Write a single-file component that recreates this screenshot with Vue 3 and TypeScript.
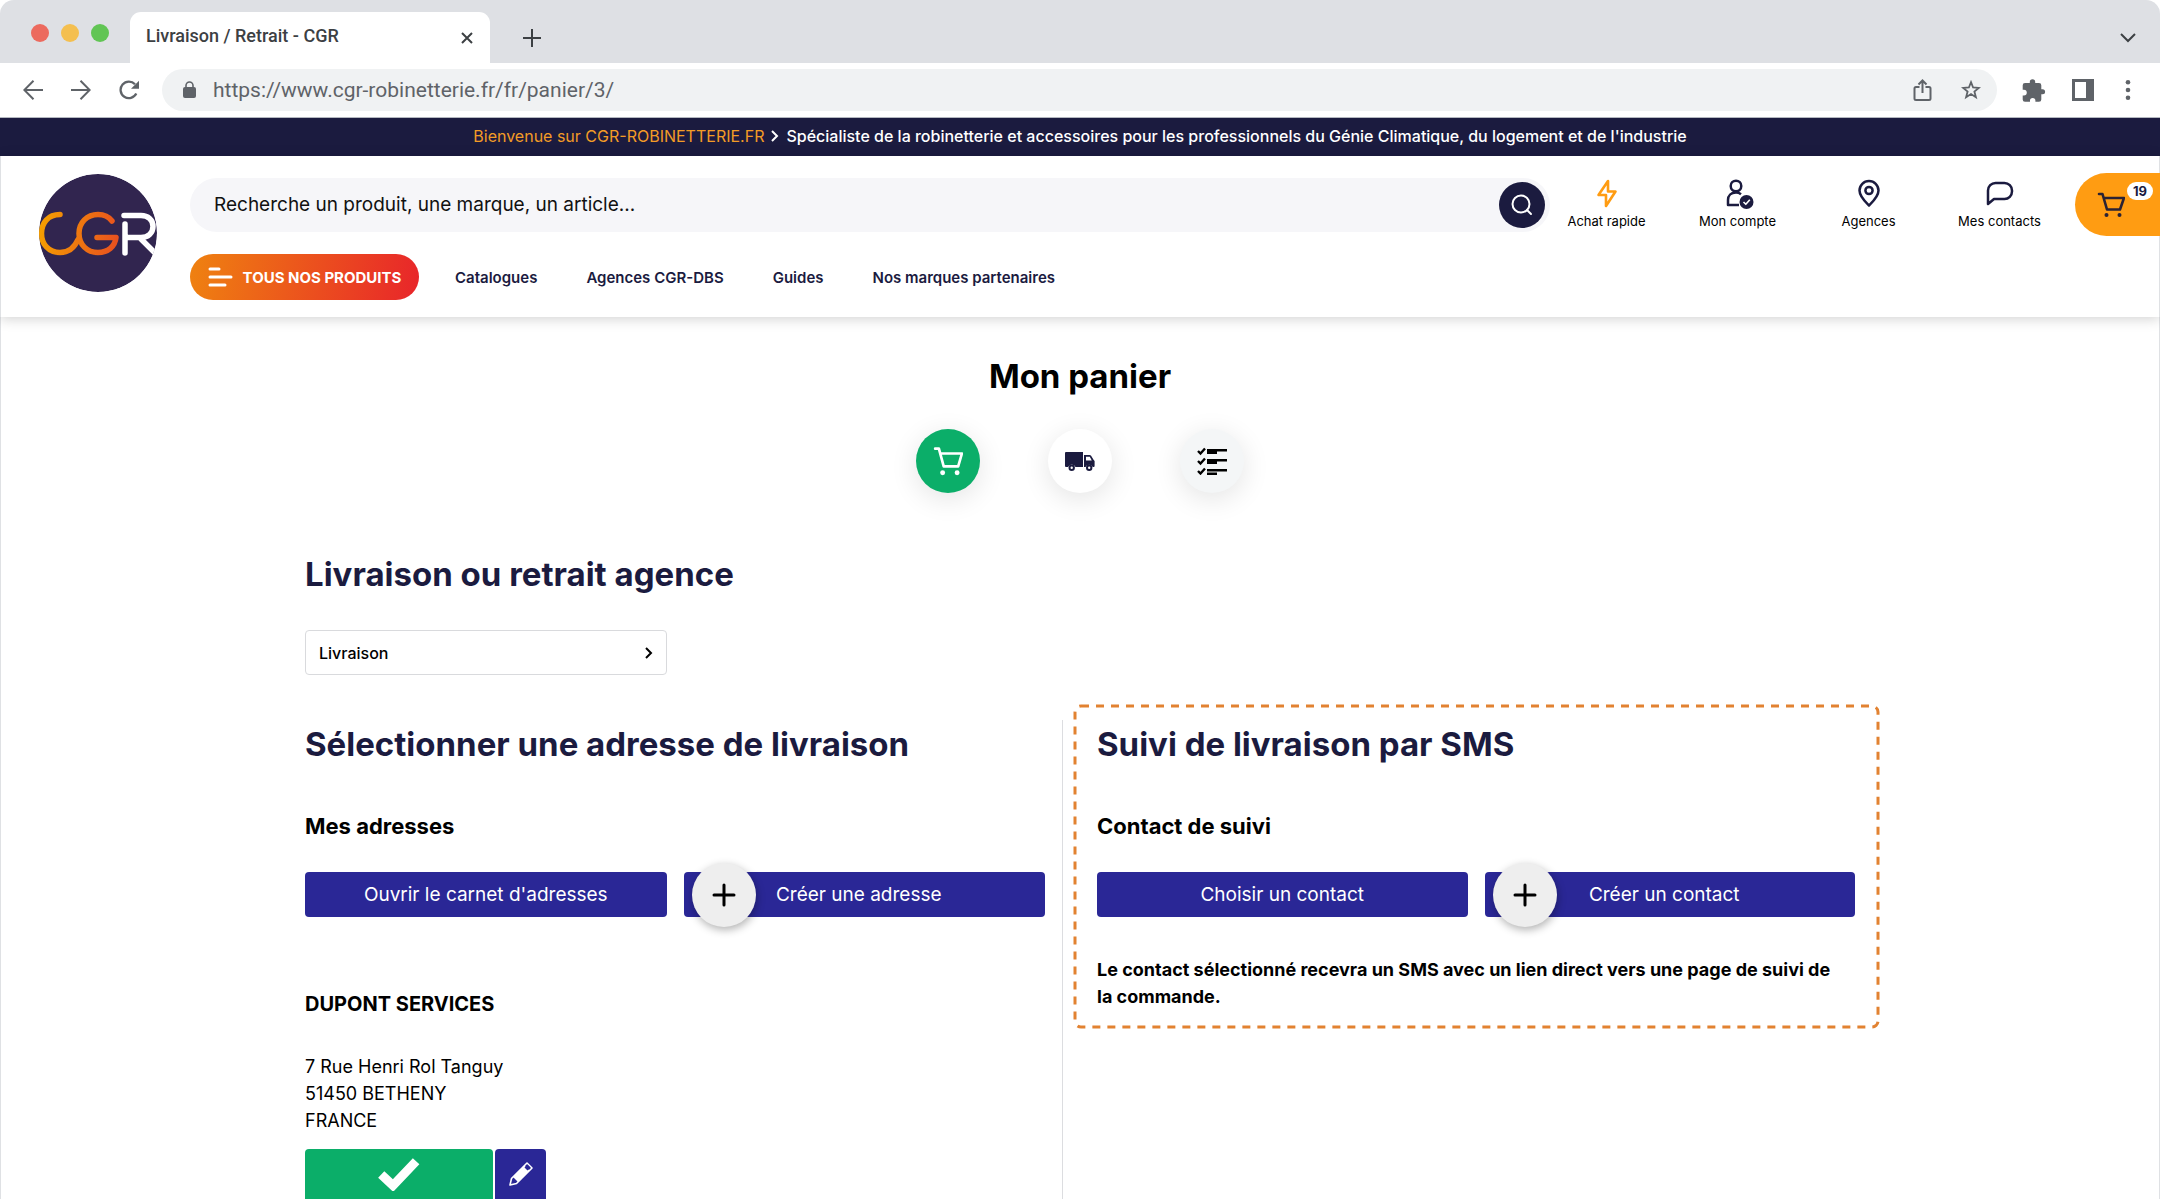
<script setup lang="ts">
import { ref } from 'vue'

interface Shortcut {
  label: string
  icon: 'bolt' | 'account' | 'pin' | 'chat'
}

const search = ref('')
const mode = ref('Livraison')
const address = ref('https://www.cgr-robinetterie.fr/fr/panier/3/')

const shortcuts: Shortcut[] = [
  { label: 'Achat rapide', icon: 'bolt' },
  { label: 'Mon compte', icon: 'account' },
  { label: 'Agences', icon: 'pin' },
  { label: 'Mes contacts', icon: 'chat' },
]

const links: string[] = ['Catalogues', 'Agences CGR-DBS', 'Guides', 'Nos marques partenaires']
</script>

<template>
  <div class="window">
    <div class="tabs">
      <div class="lights">
        <span class="light red"></span>
        <span class="light yellow"></span>
        <span class="light green"></span>
      </div>
      <div class="tab">
        <span>Livraison / Retrait - CGR</span>
        <button class="plain" aria-label="Fermer l'onglet">
          <svg width="14" height="14" viewBox="0 0 14 14" fill="none" stroke="#3c4043" stroke-width="2"><path d="M2 2l10 10M12 2L2 12" /></svg>
        </button>
      </div>
      <button class="plain new-tab" aria-label="Nouvel onglet">
        <svg width="18" height="18" viewBox="0 0 18 18" fill="none" stroke="#3c4043" stroke-width="2"><path d="M9 0v18M0 9h18" /></svg>
      </button>
      <button class="plain tab-list" aria-label="Liste des onglets">
        <svg width="16" height="10" viewBox="0 0 16 10" fill="none" stroke="#3c4043" stroke-width="2"><path d="M1 1l7 7 7-7" /></svg>
      </button>
    </div>

    <div class="toolbar">
      <div class="moves">
        <button class="plain" aria-label="Précédent">
          <svg width="20" height="20" viewBox="0 0 20 20" fill="none" stroke="#5f6368" stroke-width="2"><path d="M20 10H1.500M10.500 .8L1.300 10l9.200 9.200" /></svg>
        </button>
        <button class="plain" aria-label="Suivant">
          <svg width="20" height="20" viewBox="0 0 20 20" fill="none" stroke="#5f6368" stroke-width="2"><path d="M0 10h18.500M9.500 .8l9.200 9.200-9.200 9.200" /></svg>
        </button>
        <button class="plain" aria-label="Actualiser">
          <svg width="20" height="20" viewBox="0 0 20 20"><path d="M17.300 13.600A8.300 8.300 0 1 1 16 4.200" fill="none" stroke="#5f6368" stroke-width="2.300" /><path d="M20 .8v8h-8z" fill="#5f6368" /></svg>
        </button>
      </div>
      <label class="omnibox">
        <svg width="13" height="18" viewBox="0 0 13 18"><rect y="6" width="13" height="11" rx="2" fill="#5f6368" /><path d="M3 7V4.500a3.500 3.500 0 0 1 7 0V7" fill="none" stroke="#5f6368" stroke-width="1.600" /></svg>
        <input v-model="address" type="text" aria-label="Adresse" />
        <svg width="20" height="22" viewBox="0 0 20 22" fill="none" stroke="#5f6368" stroke-width="2"><path d="M6.500 8H3a1.500 1.500 0 0 0-1.500 1.500v10A1.500 1.500 0 0 0 3 21h13a1.500 1.500 0 0 0 1.500-1.500v-10A1.500 1.500 0 0 0 16 8h-3.500M9.500 14V2M5.500 5.500l4-4 4 4" /></svg>
        <svg class="star" width="20" height="20" viewBox="0 0 20 20" fill="none" stroke="#5f6368" stroke-width="1.800"><path d="M10 2.200l2.100 5.300 5.700.4-4.400 3.600 1.500 5.800-4.900-3.200-4.900 3.200 1.500-5.800L2.200 7.900l5.700-.4z" /></svg>
      </label>
      <div class="tools">
        <button class="plain" aria-label="Extensions">
          <svg width="24" height="23" viewBox="0 0 24 23" fill="#5f6368"><path d="M7.800 4V3a2.700 2.700 0 0 1 5.400 0v1H17a2.300 2.300 0 0 1 2.300 2.300v4h1.300a2.500 2.500 0 0 1 0 5h-1.300V20.500A2.300 2.300 0 0 1 17 22.800h-3.600v-1.200a2.700 2.700 0 0 0-5.400 0v1.200H3A2.300 2.300 0 0 1 .7 20.500v-4h1.200a2.900 2.900 0 0 0 0-5.800H.7V6.300A2.300 2.300 0 0 1 3 4z" /></svg>
        </button>
        <button class="plain" aria-label="Panneau latéral">
          <svg width="22" height="22" viewBox="0 0 22 22"><path fill="#5f6368" fill-rule="evenodd" d="M0 0h22v22H0zM3 3v16h11V3z" /></svg>
        </button>
        <button class="plain" aria-label="Menu">
          <svg width="6" height="20" viewBox="0 0 6 20" fill="#5f6368"><circle cx="3" cy="2.300" r="2.300" /><circle cx="3" cy="10" r="2.300" /><circle cx="3" cy="17.700" r="2.300" /></svg>
        </button>
      </div>
    </div>

    <div class="page">
      <div class="banner">
        <span class="welcome">Bienvenue sur CGR-ROBINETTERIE.FR</span>
        <svg width="8" height="12" viewBox="0 0 8 12" fill="none" stroke="#fff" stroke-width="2"><path d="M1 1l5 5-5 5" /></svg>
        <span>Spécialiste de la robinetterie et accessoires pour les professionnels du Génie Climatique, du logement et de l'industrie</span>
      </div>

      <header class="header">
        <a href="#" class="logo" aria-label="CGR">
          <svg width="118" height="118" viewBox="0 0 118 118">
            <defs>
              <clipPath id="disc"><circle cx="59" cy="59" r="59" /></clipPath>
              <linearGradient id="flame" gradientUnits="userSpaceOnUse" x1="0" y1="50" x2="80" y2="62"><stop offset="0" stop-color="#f5a000" /><stop offset="1" stop-color="#e8501f" /></linearGradient>
            </defs>
            <g clip-path="url(#disc)">
              <circle cx="59" cy="59" r="59" fill="#31254f" />
              <g fill="none" stroke-width="5.500" stroke-linecap="round" stroke-linejoin="round">
                <path stroke="url(#flame)" d="M21 40.500C9 40.500 2.500 49 2.500 59.500s7 19 18.500 19c10 0 15-6 18-13" />
                <path stroke="url(#flame)" d="M73 47C70 43 65 40.500 59 40.500c-11 0-19 8-19 19s8 19 19 19c10 0 17-6 18-15H58" />
                <path stroke="#fff" d="M85 41.500h17c7 0 12 4.500 12 11s-5 11-12 11H89M86 50v29M102 65l16 16" />
              </g>
            </g>
          </svg>
        </a>
        <div class="header-body">
          <div class="header-top">
            <form class="search" @submit.prevent>
              <input v-model="search" type="text" aria-label="Recherche" placeholder="Recherche un produit, une marque, un article..." />
              <button type="submit" aria-label="Rechercher">
                <svg width="22" height="22" viewBox="0 0 22 22" fill="none" stroke="#fff" stroke-width="2" stroke-linecap="round"><circle cx="10" cy="10" r="8.500" /><path d="M16 16l4 4" /></svg>
              </button>
            </form>
            <nav class="shortcuts">
              <a v-for="item in shortcuts" :key="item.label" href="#">
                <svg v-if="item.icon === 'bolt'" width="32" height="32" viewBox="0 0 32 32" fill="none" stroke="#ff9c12" stroke-width="2.600" stroke-linejoin="round"><path d="M17 4L7.500 18h7.500L15 29l9.500-14.500H17z" /></svg>
                <svg v-else-if="item.icon === 'account'" width="32" height="32" viewBox="0 0 32 32" fill="none" stroke="#1b1b3f" stroke-width="2.500" stroke-linejoin="round"><circle cx="14" cy="9" r="5.300" /><path d="M19 17.200c-2-1.600-3-1.700-5-1.700-5 0-8 3-8 7.500V28h11" /><circle cx="24.500" cy="25" r="7" fill="#1b1b3f" stroke="none" /><path d="M21.500 25l2.300 2.300 4-4.500" stroke="#fff" stroke-width="1.600" /></svg>
                <svg v-else-if="item.icon === 'pin'" width="32" height="32" viewBox="0 0 32 32" fill="none" stroke="#1b1b3f" stroke-width="2.500" stroke-linejoin="round"><path d="M16 28.500c-4-4-9.500-9-9.500-15a9.500 9.500 0 0 1 19 0c0 6-5.500 11-9.500 15z" /><circle cx="16" cy="13.500" r="3.600" /></svg>
                <svg v-else width="32" height="32" viewBox="0 0 32 32" fill="none" stroke="#1b1b3f" stroke-width="2.500" stroke-linejoin="round"><path d="M4 27V13.500a7.500 7.500 0 0 1 7.500-7.500h9a7.500 7.500 0 0 1 7.500 7.500v1a7.500 7.500 0 0 1-7.500 7.500H10z" /></svg>
                <span>{{ item.label }}</span>
              </a>
            </nav>
            <a href="#" class="cart" aria-label="Panier">
              <svg width="28" height="28" viewBox="0 0 28 28" fill="none" stroke="#2b2233" stroke-width="2.600" stroke-linejoin="round" stroke-linecap="round"><path d="M2 3h3.500L10 18.500h13L27 7H7" /><circle cx="9.500" cy="24" r="2" fill="#2b2233" stroke="none" /><circle cx="22.500" cy="24" r="2" fill="#2b2233" stroke="none" /></svg>
              <span class="count">19</span>
            </a>
          </div>
          <nav class="menu">
            <button class="all">
              <svg width="25" height="20" viewBox="0 0 25 20" fill="none" stroke="#fff" stroke-width="3" stroke-linecap="round"><path d="M2 2h9M2 10h21M2 18h15" /></svg>
              TOUS NOS PRODUITS
            </button>
            <a v-for="link in links" :key="link" href="#">{{ link }}</a>
          </nav>
        </div>
      </header>

      <main class="main">
        <h1>Mon panier</h1>
        <div class="steps">
          <span class="step done">
            <svg width="30" height="30" viewBox="0 0 28 28" fill="none" stroke="#fff" stroke-width="2.500" stroke-linejoin="round" stroke-linecap="round"><path d="M2 2.500h3.500L10 19h13.500L27 7H7" /><circle cx="9" cy="25" r="2.300" fill="#fff" stroke="none" /><circle cx="22.500" cy="25" r="2.300" fill="#fff" stroke="none" /></svg>
          </span>
          <span class="step">
            <svg width="30" height="20" viewBox="0 0 30 20"><path fill="#1b1b3f" d="M1 1h17v15H10.500a4 4 0 0 0-7.500 0H1a1 1 0 0 1-1-1V2a1 1 0 0 1 1-1z" /><path fill="#1b1b3f" fill-rule="evenodd" d="M19 4h5.500a2 2 0 0 1 1.600.8l2.600 4.200.9 1v5a1 1 0 0 1-1 1h-.8a4 4 0 0 0-7.300 0H19zM21 5.800v3.800h5.800l-2-3.800z" /><g fill="#fff" stroke="#1b1b3f" stroke-width="2"><circle cx="6.700" cy="16.700" r="2.200" /><circle cx="24.200" cy="16.700" r="2.200" /></g></svg>
          </span>
          <span class="step next">
            <svg width="30" height="28" viewBox="0 0 30 28"><g fill="none" stroke="#000" stroke-width="2.400"><path d="M1 4l2.500 2.500L8 1.500M1 14l2.500 2.500L8 11.500M1 24l2.500 2.500L8 21.500" /></g><path d="M10 2h20v2.500H20V7H10zM10 12h20v2.500H20V17H10zM10 22h20v2.500H10zM10 25.500h10V28H10z" /></svg>
          </span>
        </div>

        <h2 class="mode-title"><label for="mode">Livraison ou retrait agence</label></h2>
        <div class="select">
          <select id="mode" v-model="mode">
            <option>Livraison</option>
            <option>Retrait agence</option>
          </select>
          <svg width="8" height="12" viewBox="0 0 8 12" fill="none" stroke="#000" stroke-width="2"><path d="M1 1l5 5-5 5" /></svg>
        </div>

        <div class="columns">
          <section class="addresses">
            <h2>Sélectionner une adresse de livraison</h2>
            <h3>Mes adresses</h3>
            <div class="actions">
              <button>Ouvrir le carnet d'adresses</button>
              <button class="create">
                <span class="plus"><svg width="24" height="24" viewBox="0 0 24 24" fill="none" stroke="#000" stroke-width="3" stroke-linecap="round"><path d="M12 2v20M2 12h20" /></svg></span>
                Créer une adresse
              </button>
            </div>
            <h4>DUPONT SERVICES</h4>
            <address>7 Rue Henri Rol Tanguy<br />51450 BETHENY<br />FRANCE</address>
            <div class="choice">
              <button class="pick" aria-label="Choisir cette adresse">
                <svg width="44" height="34" viewBox="0 0 44 34" fill="none" stroke="#fff" stroke-width="9" stroke-linecap="square"><path d="M7.500 20.500L16 28.500 36 7.500" /></svg>
              </button>
              <button class="edit" aria-label="Modifier">
                <svg width="24" height="24" viewBox="0 0 24 24" fill="none" stroke="#fff" stroke-width="1.600" stroke-linejoin="round"><path d="M1 23l1.500-6.500L18 1l5 5L7.500 21.500z" /><path d="M4 15L15.500 3.500l5 5L9 20z" fill="#fff" stroke="none" /><path d="M15.500 5.500l3-3L21.500 5.500l-3 3z" fill="#2a2796" stroke="none" /></svg>
              </button>
            </div>
          </section>

          <div class="tracking-cell">
            <section class="tracking">
              <svg class="outline" aria-hidden="true"><rect width="100%" height="100%" rx="6" fill="none" stroke="#e28231" stroke-width="3" stroke-dasharray="8 7" /></svg>
              <h2>Suivi de livraison par SMS</h2>
              <h3>Contact de suivi</h3>
              <div class="actions">
                <button>Choisir un contact</button>
                <button class="create">
                  <span class="plus"><svg width="24" height="24" viewBox="0 0 24 24" fill="none" stroke="#000" stroke-width="3" stroke-linecap="round"><path d="M12 2v20M2 12h20" /></svg></span>
                  Créer un contact
                </button>
              </div>
              <p>Le contact sélectionné recevra un SMS avec un lien direct vers une page de suivi de la commande.</p>
            </section>
          </div>
        </div>
      </main>
    </div>
  </div>
</template>

<style>
body {
  background: #fff;
}
</style>

<style scoped>
* {
  box-sizing: border-box;
  margin: 0;
}
.window {
  min-height: 100vh;
  display: flex;
  flex-direction: column;
  font-family: Inter, 'Liberation Sans', sans-serif;
  font-size: 18px;
  color: #000;
}
svg {
  display: block;
  flex: none;
}
a {
  color: inherit;
  text-decoration: none;
}
button,
input,
select {
  font: inherit;
  color: inherit;
  border: 0;
  padding: 0;
}
.plain {
  background: none;
  display: flex;
}
.tabs {
  height: 63px;
  background: #dee0e4;
  border-radius: 14px 14px 0 0;
  display: flex;
  align-items: center;
  padding: 0 24px 0 31px;
  font-family: Roboto, sans-serif;
}
.lights {
  display: flex;
  gap: 12px;
  width: 99px;
}
.light {
  width: 18px;
  height: 18px;
  border-radius: 50%;
  margin-top: 2px;
}
.red {
  background: #ec6a5e;
}
.yellow {
  background: #f4bf4f;
}
.green {
  background: #61c554;
}
.tab {
  align-self: flex-end;
  width: 360px;
  height: 51px;
  padding: 0 16px 4px;
  background: #fff;
  border-radius: 11px 11px 0 0;
  display: flex;
  align-items: center;
  justify-content: space-between;
  font-size: 18px;
  font-weight: 500;
  color: #3c4043;
}
.tab .plain {
  margin-top: 4px;
}
.new-tab {
  margin: 12px 0 0 33px;
}
.tab-list {
  margin: 12px 0 0 auto;
}
.toolbar {
  height: 55px;
  display: flex;
  align-items: center;
  padding: 0 29px 0 23px;
  border-bottom: 1px solid #b4b8c0;
}
.moves {
  display: flex;
  gap: 28px;
  width: 139px;
}
.omnibox {
  flex: 1;
  height: 42px;
  padding: 0 16px 0 21px;
  background: #f0f2f3;
  border-radius: 21px;
  display: flex;
  align-items: center;
}
.omnibox input {
  flex: 1;
  margin-left: 17px;
  background: none;
  outline: 0;
  color: #5f6368;
  font-family: Roboto, sans-serif;
  font-size: 21px;
}
.star {
  margin-left: 28px;
}
.tools {
  display: flex;
  align-items: center;
  gap: 26px;
  margin-left: 25px;
}
.tools .plain:last-child {
  margin-left: 5px;
}
.page {
  flex: 1;
  display: flex;
  flex-direction: column;
  box-shadow: inset 1px 0 #dfe1e4, inset -1px 0 #dfe1e4;
}
.banner {
  height: 38px;
  padding-bottom: 2px;
  background: #1b1b3f;
  color: #fff;
  display: flex;
  align-items: center;
  justify-content: center;
  gap: 7px;
  font-size: 16px;
  font-weight: 500;
}
.welcome {
  color: #f39c26;
  font-weight: 400;
}
.header {
  height: 161px;
  display: flex;
  align-items: flex-start;
  padding: 17px 0 0 39px;
  gap: 33px;
  box-shadow: 0 2px 12px rgba(0, 0, 0, 0.18);
}
.logo {
  padding-top: 1px;
}
.header-body {
  flex: 1;
}
.header-top {
  display: flex;
  align-items: center;
  height: 63px;
}
.search {
  flex: 1;
  height: 54px;
  border-radius: 27px;
  background: #f6f6f9;
  display: flex;
  align-items: center;
  padding: 0 5px 0 24px;
}
.search input {
  flex: 1;
  background: none;
  outline: 0;
  font-size: 19px;
}
.search input::placeholder {
  color: #111;
  opacity: 1;
}
.search button {
  width: 46px;
  height: 46px;
  border-radius: 50%;
  background: #1b1b3f;
  display: flex;
  align-items: center;
  justify-content: center;
}
.shortcuts {
  display: flex;
  margin: 0 10px 0 -9px;
  padding-bottom: 2px;
}
.shortcuts a {
  width: 131px;
  display: flex;
  flex-direction: column;
  align-items: center;
  gap: 2px;
  font-size: 13px;
  line-height: 20px;
}
.cart {
  position: relative;
  width: 85px;
  height: 63px;
  border-radius: 32px 0 0 32px;
  background: #ff9c12;
  padding: 18px 0 0 22px;
}
.count {
  position: absolute;
  top: 9px;
  right: 7px;
  width: 26px;
  border-radius: 9px;
  background: #fff;
  color: #1b1b3f;
  font-size: 13px;
  line-height: 18px;
  font-weight: 700;
  text-align: center;
}
.menu {
  display: flex;
  align-items: center;
  gap: 49px;
  margin-top: 18px;
  color: #1b1b3f;
  font-size: 15px;
  font-weight: 600;
}
.all {
  width: 229px;
  height: 46px;
  margin-right: -13px;
  border-radius: 23px;
  background: linear-gradient(100deg, #ef8210, #e8252a);
  color: #fff;
  font-weight: 700;
  display: flex;
  align-items: center;
  justify-content: center;
  gap: 10px;
}
.main {
  flex: 1;
  display: flex;
  flex-direction: column;
  width: 100%;
  max-width: 1550px;
  margin: 0 auto;
  padding-top: 39px;
}
h1,
h2 {
  font-size: 33px;
  line-height: 40px;
  font-weight: 700;
}
h1 {
  text-align: center;
}
h2 {
  color: #1b1b3f;
}
.steps {
  display: flex;
  justify-content: center;
  gap: 68px;
  margin-top: 33px;
}
.step {
  width: 64px;
  height: 64px;
  border-radius: 50%;
  background: #fff;
  box-shadow: 0 6px 28px rgba(0, 0, 0, 0.11);
  display: flex;
  align-items: center;
  justify-content: center;
}
.done {
  background: #0bae69;
}
.next {
  background: #f4f6f7;
}
.mode-title {
  margin-top: 61px;
}
.select {
  position: relative;
  width: 362px;
  margin-top: 36px;
}
.select select {
  width: 100%;
  height: 45px;
  padding: 0 13px;
  appearance: none;
  background: #fff;
  border: 1px solid #d9dadd;
  border-radius: 4px;
  font-size: 16px;
  font-weight: 500;
}
.select svg {
  position: absolute;
  right: 14px;
  top: 17px;
  pointer-events: none;
}
.columns {
  flex: 1;
  display: grid;
  grid-template-columns: 758fr 792fr;
  margin-top: 45px;
}
.addresses {
  padding: 4px 17px 0 0;
  border-right: 1px solid #dcdde0;
}
.tracking-cell {
  margin: -15px -24px 0 11px;
}
.tracking {
  position: relative;
  padding: 19px 24px 18px 23px;
}
.outline {
  position: absolute;
  top: 1px;
  left: 1px;
  width: calc(100% - 2px);
  height: calc(100% - 2px);
  overflow: visible;
  pointer-events: none;
}
h3 {
  margin-top: 47px;
  font-size: 22px;
  line-height: 30px;
  font-weight: 700;
}
.actions {
  display: grid;
  grid-template-columns: 1fr 1fr;
  gap: 17px;
  margin-top: 31px;
}
.actions button {
  position: relative;
  height: 45px;
  border-radius: 4px;
  background: #2a2796;
  color: #fff;
  font-size: 19px;
}
.actions .create {
  padding-right: 11px;
}
.plus {
  position: absolute;
  left: 8px;
  top: -9px;
  width: 64px;
  height: 64px;
  border-radius: 50%;
  background: #eee;
  box-shadow: 1px 3px 8px rgba(0, 0, 0, 0.3);
  display: flex;
  align-items: center;
  justify-content: center;
}
h4 {
  margin-top: 73px;
  font-size: 20px;
  line-height: 28px;
  font-weight: 700;
}
address {
  margin-top: 35px;
  font-style: normal;
  line-height: 27px;
}
.choice {
  display: flex;
  gap: 2px;
  margin-top: 15px;
}
.choice button {
  height: 50px;
  border-radius: 4px 4px 0 0;
  display: flex;
  align-items: center;
  justify-content: center;
}
.pick {
  width: 188px;
  background: #0bae69;
}
.edit {
  width: 51px;
  background: #2a2796;
}
p {
  margin-top: 39px;
  padding-right: 12px;
  font-weight: 700;
  line-height: 27px;
}
</style>
